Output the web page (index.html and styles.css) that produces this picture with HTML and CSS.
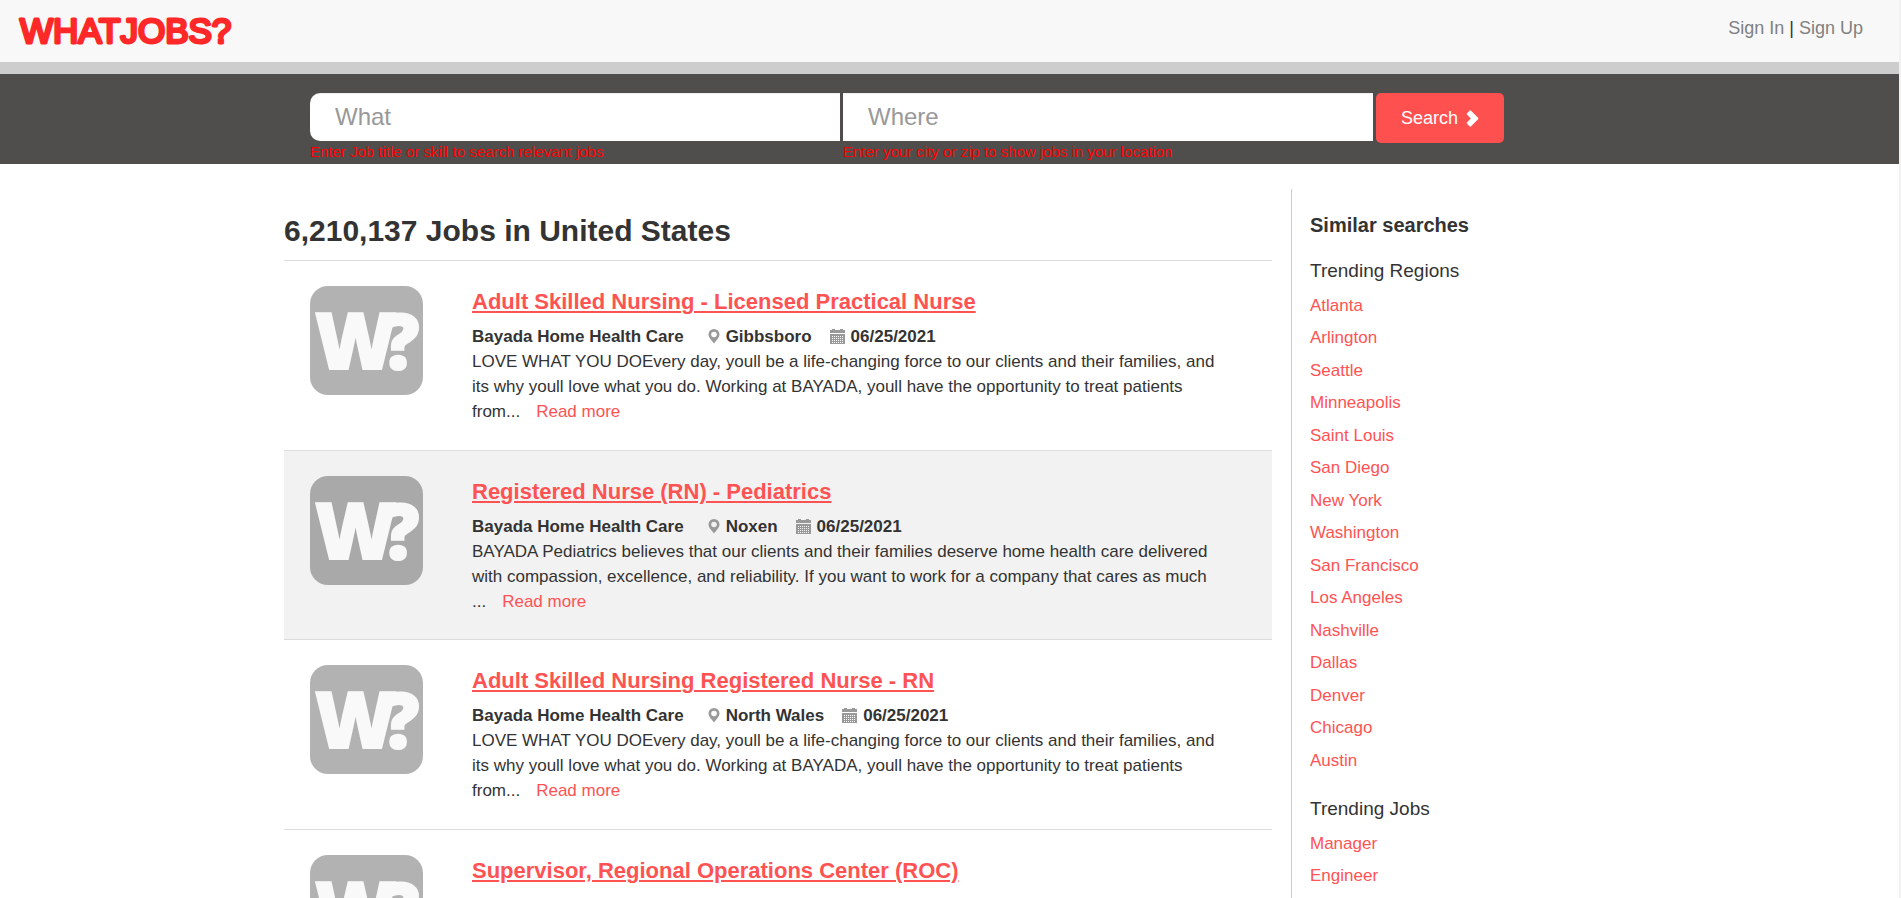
FILE: index.html
```html
<!DOCTYPE html>
<html lang="en">
<head>
<meta charset="utf-8">
<title>6,210,137 Jobs in United States</title>
<link rel="stylesheet" href="styles.css">
</head>
<body>
<svg class="sprite" aria-hidden="true">
  <symbol id="pin" viewBox="0 0 12 16"><path fill-rule="evenodd" d="M6 1a5.500 5.500 0 0 0-5.500 5.500C.5 9.500 3.500 12 6 15.500 8.500 12 11.500 9.500 11.500 6.500A5.500 5.500 0 0 0 6 1zm0 2.700a2.800 2.800 0 1 1 0 5.600 2.800 2.800 0 0 1 0-5.600z"/></symbol>
  <symbol id="calendar" viewBox="0 0 15 15"><path fill-rule="evenodd" d="M0 1h2V0h3v1h5V0h3v1h2v3H0zM0 5h15v10H0zM2 7v1h1V7zm2 0v1h1V7zm2 0v1h1V7zm2 0v1h1V7zm2 0v1h1V7zm2 0v1h1V7zM2 9v1h1V9zm2 0v1h1V9zm2 0v1h1V9zm2 0v1h1V9zm2 0v1h1V9zm2 0v1h1V9zM2 11v1h1v-1zm2 0v1h1v-1zm2 0v1h1v-1zm2 0v1h1v-1zm2 0v1h1v-1zm2 0v1h1v-1zM2 13v1h1v-1zm2 0v1h1v-1zm2 0v1h1v-1zm2 0v1h1v-1zm2 0v1h1v-1zm2 0v1h1v-1z"/></symbol>
</svg>

<header class="topbar">
  <a href="#" class="brand" aria-label="WhatJobs?">
    <svg width="220" height="40" viewBox="0 0 220 40"><text class="brand-text" x="4" y="31">WHATJOBS?</text></svg>
  </a>
  <nav class="account"><a href="#">Sign In</a> | <a href="#">Sign Up</a></nav>
</header>

<div class="searchbar">
  <form class="search">
    <div class="field">
      <input class="box box-first" id="what" type="text" placeholder="What" aria-label="What">
      <label class="hint" for="what">Enter Job title or skill to search relevant jobs</label>
    </div>
    <div class="field">
      <input class="box" id="where" type="text" placeholder="Where" aria-label="Where">
      <label class="hint" for="where">Enter your city or zip to show jobs in your location</label>
    </div>
    <button class="go" type="button">Search
      <svg width="13" height="17" viewBox="0 0 14 18" aria-hidden="true"><path fill="#fff" d="M1 3.500 4 .5q.6-.5 1.200 0L13 8.300q.6.700 0 1.400L5.200 17.500q-.6.500-1.200 0L1 14.500q-.5-.6 0-1.200L5.200 9 1 4.700q-.5-.6 0-1.200z"/></svg>
    </button>
  </form>
</div>

<div class="layout">
  <main class="results">
    <h1>6,210,137 Jobs in United States</h1>

    <article class="card">
      <svg class="badge" viewBox="0 0 113 109" role="img" aria-label="WhatJobs"><rect width="113" height="109" rx="18" fill-opacity=".3"/><text class="badge-text" x="5" y="83">W<tspan class="badge-mark" x="71">?</tspan></text></svg>
      <div class="info">
        <h2><a href="#">Adult Skilled Nursing - Licensed Practical Nurse</a></h2>
        <p class="meta"><span class="company">Bayada Home Health Care</span><span><svg class="pin"><use href="#pin"/></svg>Gibbsboro</span><span><svg class="cal"><use href="#calendar"/></svg>06/25/2021</span></p>
        <p>LOVE WHAT YOU DOEvery day, youll be a life-changing force to our clients and their families, and<br>its why youll love what you do. Working at BAYADA, youll have the opportunity to treat patients<br>from...<a class="more" href="#">Read more</a></p>
      </div>
    </article>

    <article class="card card-shaded">
      <svg class="badge" viewBox="0 0 113 109" role="img" aria-label="WhatJobs"><rect width="113" height="109" rx="18" fill-opacity=".3"/><text class="badge-text" x="5" y="83">W<tspan class="badge-mark" x="71">?</tspan></text></svg>
      <div class="info">
        <h2><a href="#">Registered Nurse (RN) - Pediatrics</a></h2>
        <p class="meta"><span class="company">Bayada Home Health Care</span><span><svg class="pin"><use href="#pin"/></svg>Noxen</span><span><svg class="cal"><use href="#calendar"/></svg>06/25/2021</span></p>
        <p>BAYADA Pediatrics believes that our clients and their families deserve home health care delivered<br>with compassion, excellence, and reliability. If you want to work for a company that cares as much<br>...<a class="more" href="#">Read more</a></p>
      </div>
    </article>

    <article class="card">
      <svg class="badge" viewBox="0 0 113 109" role="img" aria-label="WhatJobs"><rect width="113" height="109" rx="18" fill-opacity=".3"/><text class="badge-text" x="5" y="83">W<tspan class="badge-mark" x="71">?</tspan></text></svg>
      <div class="info">
        <h2><a href="#">Adult Skilled Nursing Registered Nurse - RN</a></h2>
        <p class="meta"><span class="company">Bayada Home Health Care</span><span><svg class="pin"><use href="#pin"/></svg>North Wales</span><span><svg class="cal"><use href="#calendar"/></svg>06/25/2021</span></p>
        <p>LOVE WHAT YOU DOEvery day, youll be a life-changing force to our clients and their families, and<br>its why youll love what you do. Working at BAYADA, youll have the opportunity to treat patients<br>from...<a class="more" href="#">Read more</a></p>
      </div>
    </article>

    <article class="card">
      <svg class="badge" viewBox="0 0 113 109" role="img" aria-label="WhatJobs"><rect width="113" height="109" rx="18" fill-opacity=".3"/><text class="badge-text" x="5" y="83">W<tspan class="badge-mark" x="71">?</tspan></text></svg>
      <div class="info">
        <h2><a href="#">Supervisor, Regional Operations Center (ROC)</a></h2>
      </div>
    </article>
  </main>

  <aside class="similar">
    <h3>Similar searches</h3>
    <h4>Trending Regions</h4>
    <ul>
      <li><a href="#">Atlanta</a></li>
      <li><a href="#">Arlington</a></li>
      <li><a href="#">Seattle</a></li>
      <li><a href="#">Minneapolis</a></li>
      <li><a href="#">Saint Louis</a></li>
      <li><a href="#">San Diego</a></li>
      <li><a href="#">New York</a></li>
      <li><a href="#">Washington</a></li>
      <li><a href="#">San Francisco</a></li>
      <li><a href="#">Los Angeles</a></li>
      <li><a href="#">Nashville</a></li>
      <li><a href="#">Dallas</a></li>
      <li><a href="#">Denver</a></li>
      <li><a href="#">Chicago</a></li>
      <li><a href="#">Austin</a></li>
    </ul>
    <h4>Trending Jobs</h4>
    <ul>
      <li><a href="#">Manager</a></li>
      <li><a href="#">Engineer</a></li>
    </ul>
  </aside>
</div>
</body>
</html>
```

FILE: styles.css
```css
* { box-sizing: border-box; }

html {
  height: 100%;
  overflow: hidden;
}

body {
  margin: 0;
  height: 100%;
  overflow: hidden;
  border-right: 2px solid #f1f1f1;
  background: #fff;
  color: #333;
  font: 17px/25px "Liberation Sans", Arial, sans-serif;
}

h1, h2, h3, h4, p, ul { margin: 0; padding: 0; }
ul { list-style: none; }
a { color: #ff5252; text-decoration: none; }

.sprite { position: absolute; width: 0; height: 0; }

/* Header */
.topbar {
  display: flex;
  justify-content: space-between;
  height: 74px;
  padding: 12px 36px 0 16px;
  border-bottom: 12px solid #cdcdcd;
  background: #f8f8f8;
}
.brand svg { display: block; }
.brand-text {
  font: 400 35px "Liberation Sans", Arial, sans-serif;
  fill: #ff2828;
  stroke: #ff2828;
  stroke-width: 3px;
  stroke-linejoin: round;
}
.account {
  padding-top: 4px;
  font-size: 18px;
}
.account a { color: #808080; }

/* Search */
.searchbar {
  height: 90px;
  padding-top: 19px;
  background: #4f4e4c;
}
.search {
  display: flex;
  align-items: flex-start;
  gap: 3px;
  max-width: 1331px;
  margin: 0 auto;
  padding: 0 111px 0 26px;
}
.field { flex: 1; }
.box {
  display: block;
  width: 100%;
  height: 48px;
  padding: 0 25px;
  border: 0;
  background: #fff;
  box-shadow: inset 0 1px 1px rgba(0, 0, 0, .075);
  color: #555;
  font: 24px "Liberation Sans", Arial, sans-serif;
}
.box-first { border-radius: 10px 0 0 10px; }
.box::placeholder { color: #999; opacity: 1; }
.hint {
  display: block;
  color: #f00;
  font-size: 15px;
  line-height: 22px;
}
.go {
  display: flex;
  flex: 0 0 128px;
  align-items: center;
  justify-content: center;
  gap: 8px;
  height: 50px;
  padding: 0;
  border: 0;
  border-radius: 5px;
  background: #ff5050;
  color: #fff;
  font: 18px "Liberation Sans", Arial, sans-serif;
}

/* Page body */
.layout {
  display: flex;
  gap: 19px;
  max-width: 1331px;
  margin: 25px auto 0;
}
.results { flex: 1; min-width: 0; }
h1 {
  padding: 22px 0 9px;
  font-size: 30px;
  line-height: 40px;
}
.card {
  display: flex;
  gap: 49px;
  padding: 25px 26px 26px;
  border-top: 1px solid #ddd;
}
.card-shaded {
  padding-bottom: 25px;
  background: #f2f2f2;
}
.badge {
  flex: none;
  width: 113px;
  height: 109px;
}
.badge-text {
  font: 800 78px "Open Sans", sans-serif;
  fill: #fff;
  stroke: #fff;
  stroke-width: 2px;
  opacity: .93;
}
.badge-mark { font-size: 76px; }
.info { flex: 1; }
h2 {
  margin-bottom: 6px;
  font-size: 22px;
  line-height: 32px;
}
h2 a { text-decoration: underline; }
.meta {
  display: flex;
  gap: 18px;
  font-weight: 700;
}
.company { padding-right: 6px; }
.pin, .cal {
  margin-right: 6px;
  fill: #999;
  vertical-align: -2px;
}
.pin { width: 12px; height: 16px; }
.cal { width: 15px; height: 15px; }
.more { margin-left: 16px; }

/* Sidebar */
.similar {
  flex: 0 0 324px;
  padding: 22px 18px 0;
  border-left: 1px solid #ccc;
}
h3 {
  margin-bottom: 19px;
  font-size: 20px;
  line-height: 28px;
}
h4 {
  margin-bottom: 10px;
  font-size: 19px;
  font-weight: 400;
  line-height: 25px;
}
.similar li { margin-bottom: 7px; }
.similar li:nth-child(even) { margin-bottom: 8px; }
.similar ul { margin-bottom: 23px; }
```
